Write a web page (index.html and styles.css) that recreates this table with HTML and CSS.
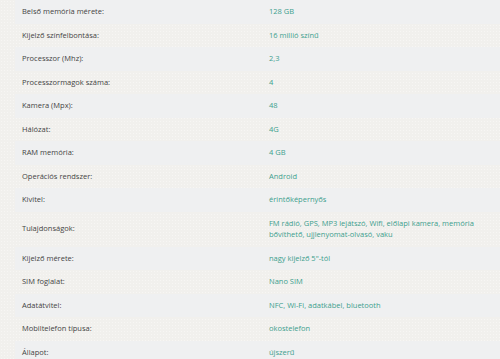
FILE: index.html
```html
<!DOCTYPE html>
<html lang="hu">
<head>
    <meta charset="UTF-8">
    <meta name="viewport" content="width=device-width, initial-scale=1.0">
    <title>Termék adatai</title>
    <link rel="stylesheet" href="styles.css">
</head>
<body>
    <table class="specs">
        <tr><td class="spec-name">Belső memória mérete:</td><td class="spec-value">128 GB</td></tr>
        <tr><td class="spec-name">Kijelző színfelbontása:</td><td class="spec-value">16 millió színű</td></tr>
        <tr><td class="spec-name">Processzor (Mhz):</td><td class="spec-value">2,3</td></tr>
        <tr><td class="spec-name">Processzormagok száma:</td><td class="spec-value">4</td></tr>
        <tr><td class="spec-name">Kamera (Mpx):</td><td class="spec-value">48</td></tr>
        <tr><td class="spec-name">Hálózat:</td><td class="spec-value">4G</td></tr>
        <tr><td class="spec-name">RAM memória:</td><td class="spec-value">4 GB</td></tr>
        <tr><td class="spec-name">Operációs rendszer:</td><td class="spec-value">Android</td></tr>
        <tr><td class="spec-name">Kivitel:</td><td class="spec-value">érintőképernyős</td></tr>
        <tr><td class="spec-name">Tulajdonságok:</td><td class="spec-value">FM rádió, GPS, MP3 lejátszó, Wifi, előlapi kamera, memória bővíthető, ujjlenyomat-olvasó, vaku</td></tr>
        <tr><td class="spec-name">Kijelző mérete:</td><td class="spec-value">nagy kijelző 5"-tól</td></tr>
        <tr><td class="spec-name">SIM foglalat:</td><td class="spec-value">Nano SIM</td></tr>
        <tr><td class="spec-name">Adatátvitel:</td><td class="spec-value">NFC, Wi-Fi, adatkábel, bluetooth</td></tr>
        <tr><td class="spec-name">Mobiltelefon típusa:</td><td class="spec-value">okostelefon</td></tr>
        <tr><td class="spec-name">Állapot:</td><td class="spec-value">újszerű</td></tr>
    </table>
</body>
</html>
```

FILE: styles.css
```css
body {
    margin: 0;
    padding: 0 0 0 15px;
    font-family: "Open Sans", Arial, sans-serif;
    font-size: 7.5px;
    line-height: 11.5px;
    background: #f1f0ed radial-gradient(#f7f6f4 0.8px, transparent 1px) 0 0 / 3px 3px;
    overflow: hidden;
}

.specs {
    width: 485px;
    border-collapse: collapse;
}

.specs tr:nth-child(odd) {
    background-color: #eff0f1;
}

.specs td {
    padding: 6px 7px;
    vertical-align: middle;
}

.spec-name {
    width: 233px;
    color: #444;
}

.spec-value {
    color: #3d9f8e;
}
```
